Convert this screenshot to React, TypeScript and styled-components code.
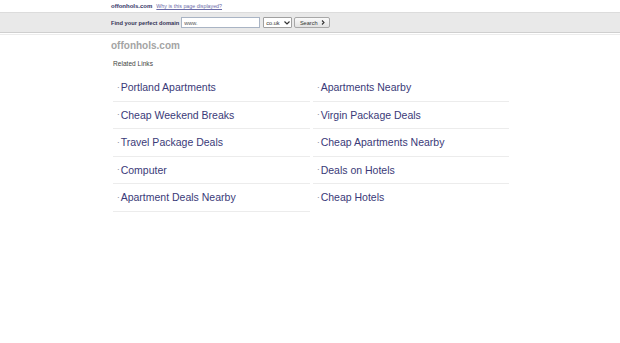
import React from 'react';
import styled, { createGlobalStyle } from 'styled-components';

const GlobalStyle = createGlobalStyle`
  html, body {
    margin: 0;
    padding: 0;
    background: #fff;
    font-family: "Liberation Sans", Arial, sans-serif;
  }
  * {
    box-sizing: border-box;
  }
`;

const Page = styled.div`
  width: 620px;
  height: 343px;
  background: #fff;
  overflow: hidden;
`;

const Inner = styled.div`
  width: 398px;
  margin: 0 auto;
`;

const TopLine = styled.div`
  height: 12px;
  display: flex;
  align-items: center;
  gap: 4px;
  font-size: 6px;
`;

const TopDomain = styled.span`
  font-weight: bold;
  color: #333366;
`;

const WhyLink = styled.a`
  color: #6a6aa8;
  text-decoration: underline;
  font-size: 5.3px;
`;

const SearchBar = styled.div`
  height: 21px;
  background: #e9e9e9;
  border-top: 1px solid #dcdcdc;
  border-bottom: 1px solid #cfcfcf;
`;

const SearchRow = styled(Inner)`
  height: 19px;
  display: flex;
  align-items: center;
`;

const FindLabel = styled.span`
  font-size: 5.7px;
  font-weight: bold;
  color: #333355;
  margin-right: 2px;
`;

const DomainInput = styled.div`
  width: 79px;
  height: 11px;
  background: #fff;
  border: 1px solid #a9b4c4;
  font-size: 5.6px;
  color: #555;
  padding-left: 2px;
  display: flex;
  align-items: center;
  margin-right: 3px;
`;

const TldSelect = styled.div`
  width: 29px;
  height: 11px;
  background: #fff;
  border: 1px solid #a0a0a0;
  border-radius: 1px;
  font-size: 5.6px;
  color: #333;
  display: flex;
  align-items: center;
  justify-content: space-between;
  padding: 0 1px 0 2px;
  margin-right: 2px;
`;

const SearchButton = styled.div`
  width: 36px;
  height: 11px;
  background: linear-gradient(#fafafa, #e2e2e2);
  border: 1px solid #a8a8a8;
  border-radius: 2px;
  font-size: 5.6px;
  color: #333;
  display: flex;
  align-items: center;
  justify-content: center;
  gap: 3px;
`;

const Divider = styled.div`
  height: 1px;
  background: #ececec;
  margin-top: 1px;
`;

const SiteTitle = styled.div`
  font-size: 10px;
  font-weight: bold;
  color: #a4a4a4;
  margin-top: 5px;
  height: 12px;
  line-height: 12px;
`;

const SectionLabel = styled.div`
  font-size: 6.6px;
  color: #444;
  margin: 7px 0 0 2px;
  height: 9px;
  line-height: 9px;
`;

const LinkGrid = styled.div`
  display: grid;
  grid-auto-flow: column;
  grid-template-rows: repeat(5, auto);
  grid-template-columns: 197px 196px;
  column-gap: 3px;
  margin: 6px 0 0 2px;
`;

const LinkItem = styled.a<{ $last?: boolean }>`
  height: 27.5px;
  display: flex;
  align-items: center;
  font-size: 10.5px;
  color: #3a3a78;
  text-decoration: none;
  border-bottom: 1px solid ${p => (p.$last ? 'transparent' : '#ececec')};
  padding-left: 4px;
`;

const Dot = styled.span`
  font-size: 8px;
  margin-right: 1px;
  color: #666;
`;

const links = [
  'Portland Apartments',
  'Cheap Weekend Breaks',
  'Travel Package Deals',
  'Computer',
  'Apartment Deals Nearby',
  'Apartments Nearby',
  'Virgin Package Deals',
  'Cheap Apartments Nearby',
  'Deals on Hotels',
  'Cheap Hotels',
];

export default function App() {
  return (
    <Page>
      <GlobalStyle />
      <Inner>
        <TopLine>
          <TopDomain>offonhols.com</TopDomain>
          <WhyLink>Why is this page displayed?</WhyLink>
        </TopLine>
      </Inner>
      <SearchBar>
        <SearchRow>
          <FindLabel>Find your perfect domain</FindLabel>
          <DomainInput>www.</DomainInput>
          <TldSelect>
            <span>co.uk</span>
            <svg width="6" height="4" viewBox="0 0 6 4">
              <path d="M0.5 0.5 L3 3 L5.5 0.5" stroke="#333" strokeWidth="1.2" fill="none" />
            </svg>
          </TldSelect>
          <SearchButton>
            <span>Search</span>
            <svg width="4" height="5" viewBox="0 0 4 5">
              <path d="M1 0.5 L3 2.5 L1 4.5" stroke="#333" strokeWidth="1.1" fill="none" />
            </svg>
          </SearchButton>
        </SearchRow>
      </SearchBar>
      <Divider />
      <Inner>
        <SiteTitle>offonhols.com</SiteTitle>
        <SectionLabel>Related Links</SectionLabel>
        <LinkGrid>
          {links.map((l, i) => (
            <LinkItem key={l} href="#" $last={i === links.length - 1}>
              <Dot>·</Dot>
              {l}
            </LinkItem>
          ))}
        </LinkGrid>
      </Inner>
    </Page>
  );
}
